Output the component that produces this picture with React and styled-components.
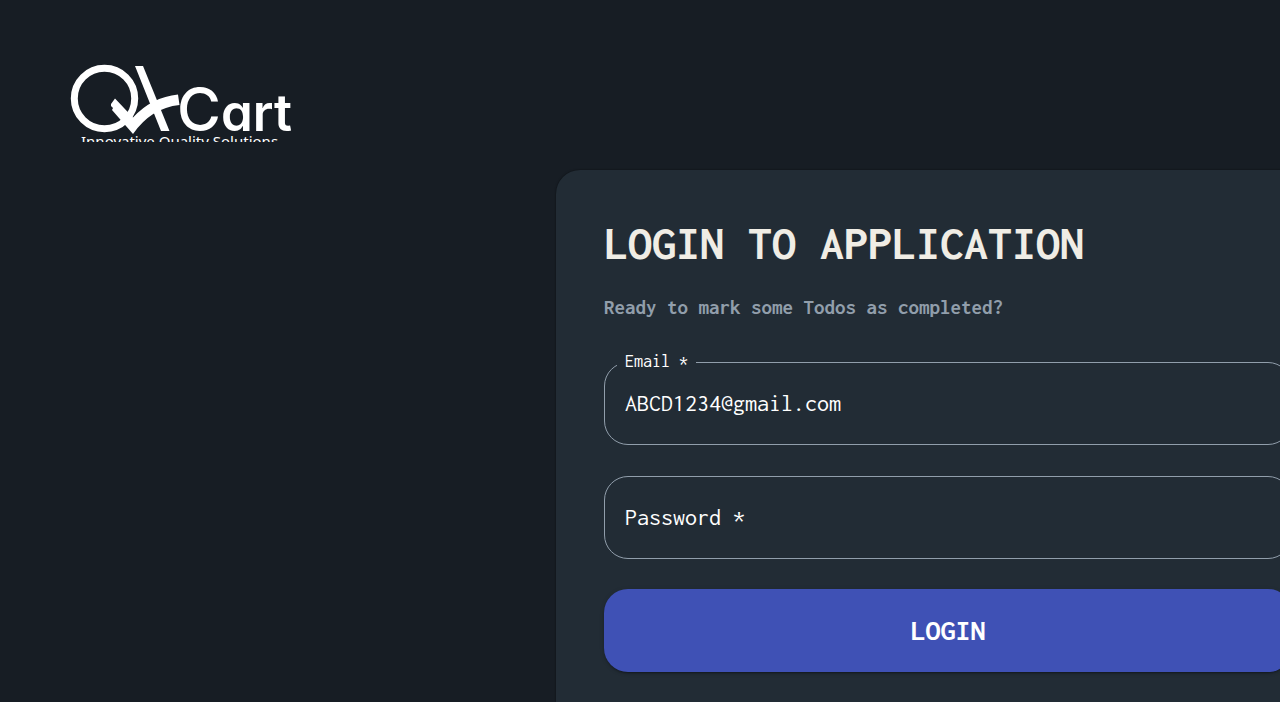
import React, { useState } from "react";
import styled, { createGlobalStyle } from "styled-components";

const mono = `"Inconsolata", "DejaVu Sans Mono", monospace`;

const GlobalStyle = createGlobalStyle`
  *, *::before, *::after { box-sizing: border-box; }
  body { margin: 0; background: #171d24; color: #fff; font-family: ${mono}; }
`;

const Page = styled.div`
  min-height: 100vh;
  display: flex;
  flex-direction: column;
  overflow: hidden;
`;

const Header = styled.header`
  display: flex;
  padding: 64px 64px 28px;
`;

const Logo = styled.svg`
  display: block;
  width: 232px;
  height: 78px;
  overflow: hidden;
  fill: #fff;
`;

const Wordmark = styled.text`
  font-family: "Inter", sans-serif;
  font-weight: ${(p) => p.$weight};
  font-size: ${(p) => p.$size}px;
  font-feature-settings: "cv11" 1;
`;

const Tagline = styled.text`
  font-family: "Noto Sans", sans-serif;
  font-size: 15px;
`;

const Main = styled.main`
  flex: 1;
  display: grid;
  grid-template-columns: minmax(556px, 1fr) 784px;
`;

const Card = styled.section`
  grid-column: 2;
  padding: 48px 48px 30px;
  border-radius: 24px 24px 0 0;
  background: #222c35;
  box-shadow: 0 0 2px rgba(0, 0, 0, 0.6);
`;

const Title = styled.h1`
  margin: 0;
  font-size: 48px;
  line-height: 50px;
  font-weight: 700;
  color: #f0ede5;
`;

const Subtitle = styled.p`
  margin: 25px 0 0;
  font-size: 21px;
  line-height: 28px;
  font-weight: 700;
  color: #919eab;
`;

const Form = styled.form`
  display: flex;
  flex-direction: column;
  margin-top: 33px;
`;

const Outline = styled.fieldset`
  position: relative;
  min-width: 0;
  margin: 0 0 ${(p) => (p.$last ? 30 : 31)}px;
  padding: 0 12px;
  border: 1px solid #919eab;
  border-radius: 24px;
`;

const Legend = styled.legend`
  padding: 0 8px 2px;
  font-size: 18px;
  line-height: 15px;
`;

const Input = styled.input`
  display: block;
  width: 100%;
  height: ${(p) => (p.$notched ? 73 : 81)}px;
  padding: 0 8px ${(p) => (p.$notched ? 10 : 2)}px;
  border: 0;
  outline: 0;
  background: transparent;
  color: #fff;
  font: 400 24px ${mono};
`;

const RestingLabel = styled.label`
  position: absolute;
  inset: 0 20px;
  display: flex;
  align-items: center;
  padding-bottom: 2px;
  font-size: 24px;
  pointer-events: none;
`;

const SubmitButton = styled.button`
  height: 83px;
  padding: 0 0 2px;
  border: 0;
  border-radius: 24px;
  background: #3f51b5;
  color: #fff;
  font: 700 30px ${mono};
  cursor: pointer;
  box-shadow: 0 3px 1px -2px rgba(0, 0, 0, 0.2), 0 2px 2px rgba(0, 0, 0, 0.14),
    0 1px 5px rgba(0, 0, 0, 0.12);
`;

function Field({ id, label, type, initial = "", last }) {
  const [value, setValue] = useState(initial);
  const [focused, setFocused] = useState(false);
  const notched = focused || value !== "";
  return (
    <Outline $last={last}>
      {notched && (
        <Legend>
          <label htmlFor={id}>{label} *</label>
        </Legend>
      )}
      <Input
        id={id}
        type={type}
        required
        value={value}
        $notched={notched}
        onChange={(e) => setValue(e.target.value)}
        onFocus={() => setFocused(true)}
        onBlur={() => setFocused(false)}
      />
      {!notched && <RestingLabel htmlFor={id}>{label} *</RestingLabel>}
    </Outline>
  );
}

function BrandLogo() {
  return (
    <Logo viewBox="64 64 232 78" role="img" aria-label="QKCart">
      <circle cx="104.5" cy="98.5" r="30.2" fill="none" stroke="#fff" strokeWidth="7" />
      <path d="M135 66h8l26.500 65h-8.500z" />
      <path d="M115 98.500L133 117.500Q152 97 178 94.500L179.500 105Q151 108 133 134L112 110L113 108L111 106V104Z" />
      <Wordmark x="177" y="131" $size={60} $weight={500}>
        C
      </Wordmark>
      <Wordmark x="221" y="131" $size={51} $weight={600}>
        art
      </Wordmark>
      <Tagline x="81" y="147">
        Innovative Quality Solutions
      </Tagline>
    </Logo>
  );
}

export default function App() {
  return (
    <>
      <GlobalStyle />
      <Page>
        <Header>
          <BrandLogo />
        </Header>
        <Main>
          <Card>
            <Title>LOGIN TO APPLICATION</Title>
            <Subtitle>Ready to mark some Todos as completed?</Subtitle>
            <Form onSubmit={(e) => e.preventDefault()}>
              <Field id="email" label="Email" type="email" initial="ABCD1234@gmail.com" />
              <Field id="password" label="Password" type="password" last />
              <SubmitButton type="submit">LOGIN</SubmitButton>
            </Form>
          </Card>
        </Main>
      </Page>
    </>
  );
}
